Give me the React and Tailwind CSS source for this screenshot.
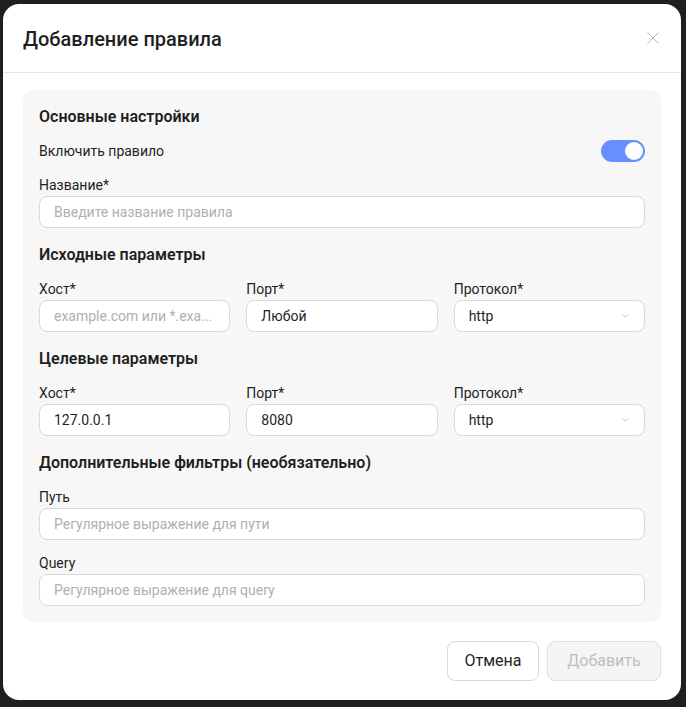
import React from "react";

const font = { fontFamily: "Roboto, 'Noto Sans', sans-serif" };

function Label({ children }) {
  return <div className="text-[14px] leading-[22px] text-[#1f1f1f]">{children}</div>;
}

function TextInput({ placeholder, value }) {
  return (
    <div className="h-[32px] w-full rounded-[8px] border border-[#d9d9d9] bg-white px-[14px] flex items-center overflow-hidden">
      {value ? (
        <span className="text-[14px] text-[#1f1f1f] truncate">{value}</span>
      ) : (
        <span className="text-[14px] text-[#b0b0b0] truncate">{placeholder}</span>
      )}
    </div>
  );
}

function SelectBox({ value }) {
  return (
    <div className="h-[32px] w-full rounded-[8px] border border-[#d9d9d9] bg-white pl-[14px] pr-[14px] flex items-center justify-between">
      <span className="text-[14px] text-[#1f1f1f]">{value}</span>
      <svg width="10" height="10" viewBox="0 0 10 10" fill="none">
        <path d="M2.5 3.8 5 6.3 7.5 3.8" stroke="#c4c4c4" strokeWidth="1" strokeLinecap="round" strokeLinejoin="round" />
      </svg>
    </div>
  );
}

function Field({ label, children }) {
  return (
    <div className="flex flex-col min-w-0">
      <Label>{label}</Label>
      {children}
    </div>
  );
}

function Heading({ children }) {
  return <div className="text-[16px] leading-[22px] font-semibold text-[#1f1f1f]">{children}</div>;
}

function Section({ title, children }) {
  return (
    <div className="flex flex-col gap-[12px]">
      <Heading>{title}</Heading>
      {children}
    </div>
  );
}

export default function App() {
  return (
    <div className="min-h-[707px] w-[686px] bg-[#1f1f1f] pt-[4px] px-[3px]" style={font}>
      <div className="w-[678px] rounded-[16px] bg-white">
        {/* header */}
        <div className="flex items-center justify-between pl-[20px] pr-[22px] h-[69px] border-b border-[#e5e5e5]">
          <div className="text-[20px] font-medium text-[#1f1f1f] leading-[28px] pt-[2px]">Добавление правила</div>
          <svg width="12" height="12" viewBox="0 0 12 12" fill="none">
            <path d="M0.5 0.5 11.5 11.5M11.5 0.5 0.5 11.5" stroke="#b3b3b3" strokeWidth="1" />
          </svg>
        </div>

        {/* body */}
        <div className="px-[20px] pt-[17px]">
          <div className="rounded-[10px] bg-[#f7f7f7] p-[16px] flex flex-col gap-[16px]">
            <Section title="Основные настройки">
              <div className="flex items-center justify-between h-[22px]">
                <span className="text-[14px] text-[#1f1f1f]">Включить правило</span>
                <div className="w-[44px] h-[22px] rounded-full bg-[#6690ff] flex items-center justify-end pr-[2px]">
                  <div className="w-[18px] h-[18px] rounded-full bg-white" />
                </div>
              </div>
              <Field label="Название*">
                <TextInput placeholder="Введите название правила" />
              </Field>
            </Section>

            <Section title="Исходные параметры">
              <div className="grid grid-cols-3 gap-[16px]">
                <Field label="Хост*">
                  <TextInput placeholder="example.com или *.exa..." />
                </Field>
                <Field label="Порт*">
                  <TextInput value="Любой" />
                </Field>
                <Field label="Протокол*">
                  <SelectBox value="http" />
                </Field>
              </div>
            </Section>

            <Section title="Целевые параметры">
              <div className="grid grid-cols-3 gap-[16px]">
                <Field label="Хост*">
                  <TextInput value="127.0.0.1" />
                </Field>
                <Field label="Порт*">
                  <TextInput value="8080" />
                </Field>
                <Field label="Протокол*">
                  <SelectBox value="http" />
                </Field>
              </div>
            </Section>

            <Section title="Дополнительные фильтры (необязательно)">
              <Field label="Путь">
                <TextInput placeholder="Регулярное выражение для пути" />
              </Field>
              <Field label="Query">
                <TextInput placeholder="Регулярное выражение для query" />
              </Field>
            </Section>
          </div>
        </div>

        {/* footer */}
        <div className="flex justify-end gap-[8px] px-[20px] pt-[19px] pb-[19px]">
          <button className="h-[40px] w-[92px] rounded-[8px] border border-[#d9d9d9] bg-white text-[16px] text-[#1f1f1f]">
            Отмена
          </button>
          <button className="h-[40px] w-[114px] rounded-[8px] border border-[#e0e0e0] bg-[#f5f5f5] text-[16px] text-[#bfbfbf]">
            Добавить
          </button>
        </div>
      </div>
    </div>
  );
}
